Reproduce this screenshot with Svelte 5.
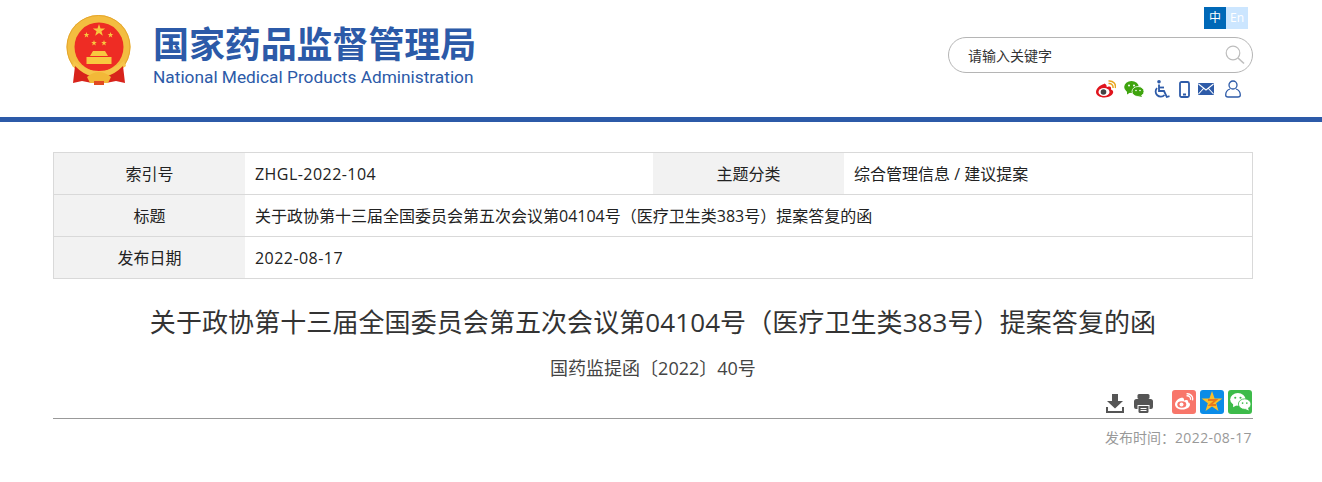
<script lang="ts">
	const rows = [
		[
			{ label: '索引号', value: 'ZHGL-2022-104', latin: true },
			{ label: '主题分类', value: '综合管理信息 / 建议提案' }
		],
		[{ label: '标题', value: '关于政协第十三届全国委员会第五次会议第04104号（医疗卫生类383号）提案答复的函' }],
		[{ label: '发布日期', value: '2022-08-17', latin: true }]
	];
	const star = 'M0,-1 L.235,-.32 .95,-.31 .38,.12 .59,.81 0,.4 -.59,.81 -.38,.12 -.95,-.31 -.235,-.32Z';
</script>

<div class="page">
	<header>
		<div class="wrap head">
			<div class="brand">
				<svg class="emblem" width="66" height="70" viewBox="0 0 66 70">
					<circle cx="32.500" cy="32" r="32" fill="#f3bd40" />
					<circle cx="32.500" cy="32" r="31.500" fill="none" stroke="#e5a62e" />
					<circle cx="33" cy="32" r="24.500" fill="#ee2c24" />
					<g fill="#f8c83f">
						<path d={star} transform="translate(33,15.500) scale(6.500)" />
						<path d={star} transform="translate(20.500,20) scale(3)" />
						<path d={star} transform="translate(44.500,20) scale(3)" />
						<path d={star} transform="translate(28,28) scale(3)" />
						<path d={star} transform="translate(38,28) scale(3)" />
						<path d="M27 36 H39 L42 41 H24 Z" />
						<path d="M20.500 42 H45.500 V49 H20.500 Z" />
					</g>
					<path d="M8 46 Q33 66 58 46 L60 51 Q33 72 6 51 Z" fill="#f6c54a" />
					<path d="M9 51 Q17 59 25 61 L26 68 L16 66 L7 68 Z" fill="#d8231b" />
					<path d="M57 51 Q49 59 41 61 L40 68 L50 66 L59 68 Z" fill="#d8231b" />
					<path d="M21 62 Q33 52 45 62 L42 68 H24 Z" fill="#f2b838" />
					<path d="M28 66 H38 V70 H28 Z" fill="#e24a22" />
				</svg>
				<div class="names">
					<div class="cn">国家药品监督管理局</div>
					<div class="en">National Medical Products Administration</div>
				</div>
			</div>
			<div class="tools">
				<div class="lang"><span class="on">中</span><span class="off">En</span></div>
				<div class="search">
					<span>请输入关键字</span>
					<svg width="20" height="20" viewBox="0 0 20 20" fill="none" stroke="#bdbdbd">
						<circle cx="8" cy="8" r="6.800" stroke-width="1.200" />
						<path d="M13 13 L19 18.500" stroke-width="1.600" />
					</svg>
				</div>
				<div class="links">
					<svg width="20" height="18" viewBox="0 0 20 18">
						<path d="M8 4C4 5 0 8.500 0 12c0 3.300 4 5.500 8.500 5.500 4.800 0 8.700-2.800 8.700-5.500 0-1.600-1.500-2.400-2.300-2.600.6-1.600.2-2.800-1.500-2.900-1 0-2.200.5-2.700.8.300-1.600-.6-3.400-2.700-3.800z" fill="#e0141c" />
						<ellipse cx="8" cy="12" rx="5.500" ry="4" fill="#fff" />
						<circle cx="7.500" cy="12" r="2.800" fill="#444" />
						<path d="M12.500 3.500c2.500-.5 5 1.500 4.500 4.500M12.500 1c4.500-.6 7.800 2.800 6.800 7" fill="none" stroke="#e8a51c" stroke-width="1.500" />
					</svg>
					<svg width="20" height="17" viewBox="0 0 20 17">
						<ellipse cx="7.500" cy="6" rx="7.300" ry="6" fill="#3fa40e" />
						<path d="M3 10 L3 13.500 L7 11 Z" fill="#3fa40e" />
						<ellipse cx="14" cy="10.500" rx="6" ry="5" fill="#3fa40e" stroke="#fff" stroke-width=".8" />
						<path d="M17 14 L18 16 L14 15 Z" fill="#3fa40e" />
						<circle cx="5" cy="4.500" r="1" fill="#fff" /><circle cx="10" cy="4.500" r="1" fill="#fff" />
						<circle cx="12" cy="9.500" r=".8" fill="#fff" /><circle cx="16" cy="9.500" r=".8" fill="#fff" />
					</svg>
					<svg width="17" height="19" viewBox="0 0 17 19" fill="none" stroke="#2e5ba8" stroke-width="1.800">
						<circle cx="6" cy="1.800" r="1.800" fill="#2e5ba8" stroke="none" />
						<path d="M6 4.500 V11 H11 L13.800 17 L16.500 16.200" />
						<path d="M6 7.500 H11" />
						<path d="M4 8 A5 5 0 1 0 11.500 15" />
					</svg>
					<svg width="11" height="17" viewBox="0 0 11 17">
						<rect x="1" y="1" width="9" height="15" rx="1.500" fill="none" stroke="#2e5ba8" stroke-width="1.800" />
						<rect x="4" y="12.500" width="3" height="2" fill="#2e5ba8" />
					</svg>
					<svg width="16" height="12" viewBox="0 0 16 12">
						<rect width="16" height="12" rx="1" fill="#2e5ba8" />
						<path d="M.5 1 L8 7 L15.500 1 M.5 11 L5.500 5.500 M15.500 11 L10.500 5.500" fill="none" stroke="#fff" stroke-width="1.100" />
					</svg>
					<svg width="16" height="18" viewBox="0 0 16 18" fill="none" stroke="#2e5ba8" stroke-width="1.300">
						<circle cx="8" cy="5" r="4" />
						<path d="M5 9 C2 10 .7 12.500.7 15 Q.7 17 3 17 H13 Q15.300 17 15.300 15 C15.300 12.500 14 10 11 9" />
					</svg>
				</div>
			</div>
		</div>
	</header>
	<div class="bar"></div>

	<main class="wrap">
		<div class="meta">
			{#each rows as row}
				<div class="row">
					{#each row as cell}
						<div class="label">{cell.label}</div>
						<div class="value" class:latin={cell.latin}>{cell.value}</div>
					{/each}
				</div>
			{/each}
		</div>

		<h1>关于政协第十三届全国委员会第五次会议第04104号（医疗卫生类383号）提案答复的函</h1>
		<div class="docno">国药监提函〔2022〕40号</div>

		<div class="actions">
			<svg class="tool" width="18" height="19" viewBox="0 0 18 19" fill="#555">
				<path d="M6 0 H12 V7 H17 L9 14.500 L1 7 H6 Z" />
				<path d="M0 13 H2 V17 H16 V13 H18 V19 H0 Z" />
			</svg>
			<svg class="tool print" width="19" height="19" viewBox="0 0 19 19" fill="#555">
				<rect x="3.500" y="0" width="12" height="5" rx="1.500" />
				<path d="M2.500 5 H16.500 Q19 5 19 7.500 V13 Q19 15 17 15 H15.500 V11 H3.500 V15 H2 Q0 15 0 13 V7.500 Q0 5 2.500 5 Z" />
				<path d="M4.500 12 H14.500 V17.500 Q14.500 19 13 19 H6 Q4.500 19 4.500 17.500 Z" />
				<path d="M6.500 14.500 H12.500 M6.500 16.500 H12.500" stroke="#fff" />
			</svg>
			<div class="share">
				<span class="sq weibo">
					<svg width="20" height="17" viewBox="0 0 20 17">
						<path d="M8 4.500C4 5.500 1 8.500 1 11.500c0 3 3.500 5 7.500 5 4.500 0 7.500-2.500 7.500-5 0-1.500-1.300-2-2-2.200.5-1.500 0-2.400-1.500-2.400-1 0-2 .4-2.500.7.300-1.300-.4-3.300-2.500-3.100z" fill="#fff" />
						<ellipse cx="7.800" cy="11.500" rx="4.500" ry="3.200" fill="#f8766a" />
						<circle cx="7.500" cy="11.500" r="2" fill="#fff" />
						<path d="M12.500 2.800c2.500-.4 4.500 1.500 4 4M12.500.8c4-.5 7 2.800 6 6.500" fill="none" stroke="#fff" stroke-width="1.300" />
					</svg>
				</span>
				<span class="sq qzone">
					<svg width="22" height="21" viewBox="-11 -11 22 21">
						<path d={star} transform="scale(11)" fill="#f7bf2a" />
						<path d="M-4 -2 H4 L-2 3 H4" fill="none" stroke="#e8791a" stroke-width="1.800" />
					</svg>
				</span>
				<span class="sq wechat">
					<svg width="21" height="18" viewBox="0 0 20 17">
						<ellipse cx="7.500" cy="6" rx="7.300" ry="6" fill="#fff" />
						<path d="M3 10 L3 13.500 L7 11 Z" fill="#fff" />
						<ellipse cx="14" cy="10.500" rx="6" ry="5" fill="#fff" stroke="#3dbb4a" stroke-width=".8" />
						<path d="M17 14 L18 16.500 L14 15 Z" fill="#fff" />
						<circle cx="5" cy="4.500" r="1" fill="#3dbb4a" /><circle cx="10" cy="4.500" r="1" fill="#3dbb4a" />
						<circle cx="12" cy="9.500" r=".8" fill="#3dbb4a" /><circle cx="16" cy="9.500" r=".8" fill="#3dbb4a" />
					</svg>
				</span>
			</div>
		</div>
		<div class="pubdate">发布时间：<span>2022-08-17</span></div>
	</main>
</div>

<style>
	:global(body) {
		margin: 0;
		background: #fff;
	}

	.page {
		font-family: 'Open Sans', 'Noto Sans CJK SC', sans-serif;
		color: #333;
	}

	.wrap {
		width: 1200px;
		margin-left: 53px;
	}

	header {
		height: 117px;
	}

	.head {
		display: flex;
		justify-content: space-between;
		height: 100%;
	}

	.brand {
		display: flex;
		align-items: flex-start;
		padding: 15px 0 0 13px;
		gap: 21px;
	}

	.names {
		color: #2c5aa8;
		margin-top: 7px;
	}

	.cn {
		font-family: 'Noto Sans CJK SC', sans-serif;
		font-weight: 700;
		font-size: 36px;
		line-height: 41px;
		letter-spacing: -0.1px;
	}

	.en {
		font-family: 'Roboto', sans-serif;
		font-size: 17.3px;
		line-height: 20px;
		margin-top: 4px;
		white-space: nowrap;
	}

	.tools {
		display: flex;
		flex-direction: column;
		align-items: flex-end;
		width: 305px;
		padding-top: 7px;
	}

	.lang {
		display: flex;
		margin-right: 5px;
		font-size: 12px;
		line-height: 22px;
		text-align: center;
	}

	.lang span {
		width: 22px;
		height: 22px;
	}

	.on {
		background: #0068b7;
		color: #fff;
	}

	.off {
		background: #cce6ff;
		color: #fff;
	}

	.search {
		box-sizing: border-box;
		width: 305px;
		height: 36px;
		margin-top: 8px;
		border: 1px solid #b5b5b5;
		border-radius: 18px;
		display: flex;
		align-items: center;
		justify-content: space-between;
		padding: 0 7px 0 19px;
		font-size: 14px;
		color: #333;
	}

	.links {
		display: flex;
		align-items: center;
		margin-top: 6px;
		height: 20px;
		padding-right: 12px;
		gap: 9px;
	}

	.links svg:nth-child(1),
	.links svg:nth-child(4) {
		margin-right: -1px;
	}

	.links svg:nth-child(5) {
		margin-right: 2px;
	}

	.bar {
		height: 5px;
		background: #2c5aa8;
	}

	.meta {
		margin-top: 30px;
		border: 1px solid #d9d9d9;
		border-bottom: 0;
		font-size: 16px;
		color: #222;
	}

	.row {
		display: flex;
		height: 41px;
		border-bottom: 1px solid #d9d9d9;
	}

	.label {
		width: 191px;
		flex: none;
		background: #f2f2f2;
		text-align: center;
		line-height: 43px;
	}

	.value {
		flex: 1;
		padding-left: 10px;
		line-height: 43px;
		white-space: nowrap;
	}

	.latin {
		letter-spacing: 0.45px;
	}

	h1 {
		margin: 25px 0 0;
		font-weight: 400;
		font-size: 26px;
		line-height: 36px;
		letter-spacing: 0.08px;
		text-align: center;
		color: #333;
	}

	.docno {
		margin-top: 15px;
		text-align: center;
		font-size: 18px;
		line-height: 26px;
		color: #444;
	}

	.actions {
		display: flex;
		justify-content: flex-end;
		align-items: center;
		height: 29px;
		margin-top: 8px;
		padding-right: 1px;
		border-bottom: 1px solid #999;
	}

	.tool {
		margin-top: -1px;
	}

	.print {
		margin-left: 10px;
	}

	.share {
		display: flex;
		gap: 4px;
		margin-left: 19px;
		margin-top: -4px;
	}

	.sq {
		width: 24px;
		height: 24px;
		border-radius: 3px;
		display: flex;
		align-items: center;
		justify-content: center;
	}

	.weibo {
		background: #f8766a;
	}

	.qzone {
		background: #0a8ce8;
	}

	.wechat {
		background: #3dbb4a;
	}

	.pubdate {
		text-align: right;
		margin-top: 9px;
		padding-right: 1px;
		font-size: 14px;
		line-height: 20px;
		color: #999;
	}

	.pubdate span {
		letter-spacing: 0.4px;
	}
</style>
